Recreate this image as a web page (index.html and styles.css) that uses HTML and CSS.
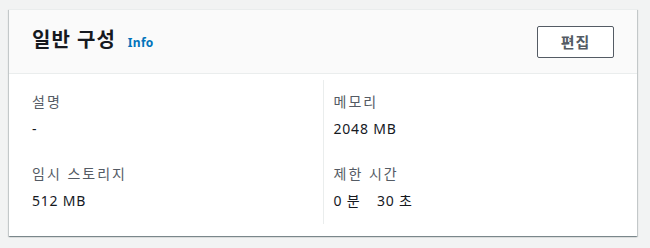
FILE: index.html
```html
<!DOCTYPE html>
<html lang="ko">
<head>
    <meta charset="UTF-8">
    <meta name="viewport" content="width=device-width, initial-scale=1.0">
    <title>일반 구성</title>
    <link rel="stylesheet" href="styles.css">
</head>
<body>
    <div class="card">
        <div class="card-header">
            <h2>일반 구성 <a class="info" href="#">Info</a></h2>
            <button type="button" class="btn">편집</button>
        </div>
        <div class="card-body">
            <div class="col">
                <div class="item">
                    <div class="label">설명</div>
                    <div class="value">-</div>
                </div>
                <div class="item">
                    <div class="label">임시 스토리지</div>
                    <div class="value">512 MB</div>
                </div>
            </div>
            <div class="col">
                <div class="item">
                    <div class="label">메모리</div>
                    <div class="value">2048 MB</div>
                </div>
                <div class="item">
                    <div class="label">제한 시간</div>
                    <div class="value">0 분 <span class="gap"></span>30 초</div>
                </div>
            </div>
        </div>
    </div>
</body>
</html>
```

FILE: styles.css
```css
body { margin: 0; padding: 9px 13px 12px 9px; background: #f2f3f3; font-family: "Noto Sans", "Noto Sans CJK KR", sans-serif; color: #16191f; }
.card { background: #fff; box-shadow: 0 1px 1px 0 rgba(0, 28, 36, 0.3), 1px 1px 1px 0 rgba(0, 28, 36, 0.15), -1px 1px 1px 0 rgba(0, 28, 36, 0.15); border-top: 1px solid #eaeded; }
.card-header { display: flex; justify-content: space-between; align-items: center; height: 63px; padding: 0 23px; background: #fafafa; border-bottom: 1px solid #eaeded; }
h2 { margin: 0; font-size: 20px; line-height: 24px; font-weight: 700; letter-spacing: 1px; display: flex; align-items: baseline; gap: 12px; }
.info { font-size: 12px; font-weight: 700; letter-spacing: 0.3px; color: #0073bb; text-decoration: none; }
.btn { width: 77px; height: 32px; background: #fff; border: 1px solid #545b64; border-radius: 2px; color: #545b64; font-family: inherit; font-size: 15px; font-weight: 700; letter-spacing: 1px; cursor: pointer; }
.card-body { display: grid; grid-template-columns: 1fr 1fr; padding: 6px 24px 12px 23px; }
.col { display: flex; flex-direction: column; gap: 23px; padding: 11px 0 12px; }
.col + .col { border-left: 1px solid #eaeded; padding-left: 10px; }
.label { font-size: 14px; line-height: 22px; color: #545b64; letter-spacing: 2px; margin-bottom: 5px; }
.value { font-size: 14px; line-height: 22px; color: #16191f; letter-spacing: 0.8px; }
.gap { display: inline-block; width: 12px; }
```
